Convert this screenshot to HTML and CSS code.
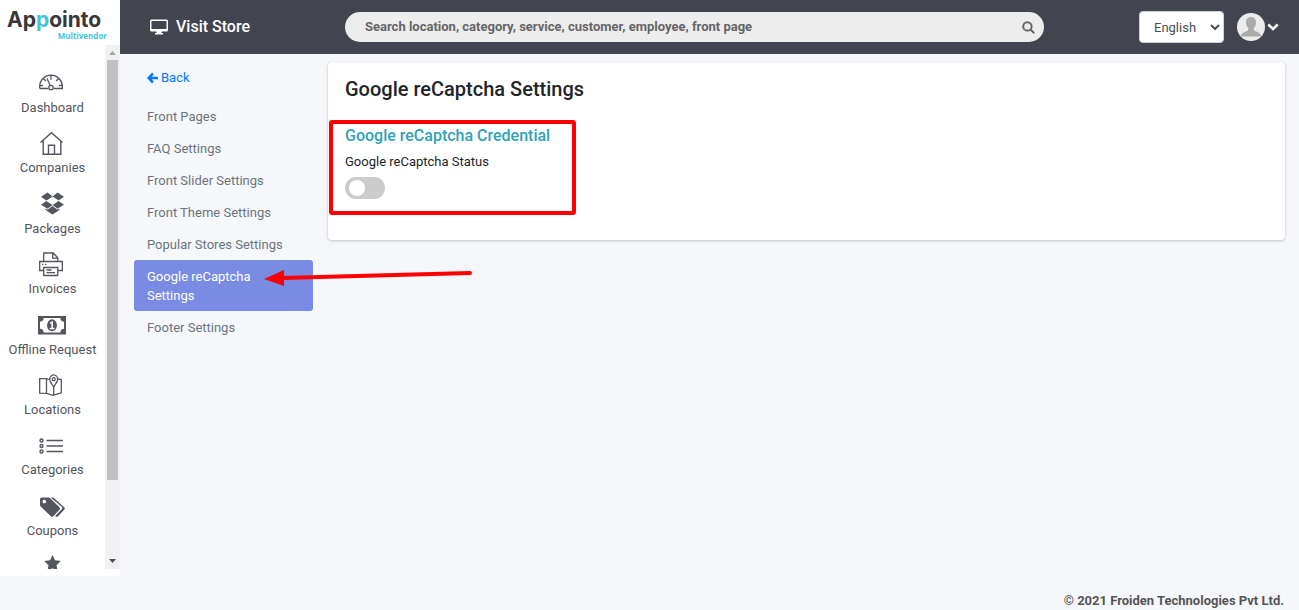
FILE: index.html
```html
<!DOCTYPE html>
<html lang="en">
<head>
<meta charset="utf-8">
<meta name="viewport" content="width=device-width, initial-scale=1">
<title>Google reCaptcha Settings</title>
<link rel="stylesheet" href="styles.css">
</head>
<body>
<div class="app">
  <aside class="sidebar">
    <a class="logo" href="#">
      <span class="logo-name">Ap<span class="logo-accent">p</span>ointo</span>
      <span class="logo-sub">Multivendor</span>
    </a>
    <div class="sidebar-body">
      <nav class="menu">
        <a class="menu-item" href="#">
          <svg class="menu-icon" viewBox="2 0 28 28" fill="none" stroke="currentColor" stroke-width="1.3"><path d="M2.7 20.5v-2.3a11 10.7 0 0 1 22.6 0v2.3h-8.6M2.7 20.5h8.6M14 7.7v4M6.6 10.8l2.2 2.2M21.4 10.8L19.2 13M3 17.5h3M22 17.5h3M10 10.5l3.2 7"/><circle cx="14" cy="19.5" r="2.2"/></svg>
          <span>Dashboard</span>
        </a>
        <a class="menu-item" href="#">
          <svg class="menu-icon" viewBox="1 -1 28 28" fill="none" stroke="currentColor" stroke-width="1.4"><path d="M2.5 13.5L13.5 3.7l11 9.8M5.2 12v13.3h17.6V12M10.5 25.3v-9.1h6v9.1"/></svg>
          <span>Companies</span>
        </a>
        <a class="menu-item menu-item-solid" href="#">
          <svg class="menu-icon" viewBox="1 0 28 28" fill="currentColor"><path d="M9.500 3.500l5.200 4-6.300 4.100L3 7.800zM19.500 3.500L26 7.800l-5.400 3.800-6-4.100zM3 15.700l5.400-3.600 6.100 4-5 3.700zM26 15.700l-5.400-3.600-6 4 5 3.700zM14.500 17l5 3.800 2-1.300v1.400L14.500 25.500l-7-4.600v-1.400l2 1.300z"/></svg>
          <span>Packages</span>
        </a>
        <a class="menu-item" href="#">
          <svg class="menu-icon" viewBox="2 -1 28 28" fill="none" stroke="currentColor" stroke-width="1.3"><path d="M6.700 11.500V3h9.500l4.600 4.700v3.800M15.700 3v5.200h5M6.700 20.500H2.700v-9h22.600v9h-4M6.700 17.500h14.100v8H6.700zM9.500 20h5M9.500 22.700h8.500M5 14.300h1.500M8 14.300h1.500"/></svg>
          <span>Invoices</span>
        </a>
        <a class="menu-item menu-item-solid" href="#">
          <svg class="menu-icon menu-icon-wide" viewBox="1 -1 30 28" fill="currentColor"><path fill-rule="evenodd" d="M1 5h28v18.500H1zM6.700 7A4 4 0 0 1 3 10.700v7a4 4 0 0 1 3.700 3.800h16.600a4 4 0 0 1 3.700-3.800v-7A4 4 0 0 1 23.300 7z"/><ellipse cx="15" cy="14.200" rx="4.900" ry="6"/><path d="M12.800 11.700l2.200-1.400h1v6.500h1.500v1.400h-4.700v-1.400h1.600v-4.500l-1 .700z" fill="#fff"/></svg>
          <span>Offline Request</span>
        </a>
        <a class="menu-item" href="#">
          <svg class="menu-icon" viewBox="2 -2 28 28" fill="none" stroke="currentColor" stroke-width="1.3"><path d="M12 7.500L9.500 6.700H2.700v14.500l6.800.1 6.500 2 8.300-2.500V7.600L20 6.800M9.500 6.700v14.600M16.700 15v8"/><path d="M16.700 15c-1-2.500-4-4.500-4-7.700a4 4.500 0 0 1 8 0c0 3.200-3 5.200-4 7.700z"/><circle cx="16.700" cy="7.200" r="1.500"/></svg>
          <span>Locations</span>
        </a>
        <a class="menu-item" href="#">
          <svg class="menu-icon" viewBox="2 -2 28 28" fill="none" stroke="currentColor" stroke-width="1.400"><circle cx="4.500" cy="8.500" r="1.500"/><circle cx="4.500" cy="14" r="1.500"/><circle cx="4.500" cy="19.500" r="1.500"/><path d="M9.500 8.500h16.500M9.500 14h16.500M9.500 19.500h16.500"/></svg>
          <span>Categories</span>
        </a>
        <a class="menu-item menu-item-solid" href="#">
          <svg class="menu-icon" viewBox="1 -2 28 28" fill="currentColor"><path fill-rule="evenodd" d="M2 6a1.500 1.500 0 0 1 1.500-1.500h7a3 3 0 0 1 2 1L21.600 14.600a1.500 1.500 0 0 1 0 2l-6.500 6.900a1.500 1.500 0 0 1-2 0L3.200 14A3 3 0 0 1 2 11.900zM6.200 6.700a1.800 1.800 0 1 0 .1 0z"/><path d="M12.700 4.500h1.800a3 3 0 0 1 2 1l9.900 9.100a1.500 1.500 0 0 1 0 2l-6.600 6.900c-.9.800-1.800.5-2.600-.4l6.700-7a1.500 1.500 0 0 0 0-2z"/></svg>
          <span>Coupons</span>
        </a>
        <a class="menu-item" href="#" aria-label="Ratings">
          <svg class="menu-icon" viewBox="1 1 28 28" fill="currentColor"><path d="M14.500 5l2.500 5.300 5.700.8-4.200 4.100 1.100 5.800-5.100-2.800L9.400 21l1.100-5.800-4.200-4.100 5.700-.8z"/></svg>
        </a>
      </nav>
      <div class="scrollbar" aria-hidden="true">
        <svg class="scroll-arrow scroll-arrow-up" viewBox="0 0 15 15"><path d="M4 10l3.500-4L11 10z" fill="currentColor"/></svg>
        <div class="scroll-track"><div class="scroll-thumb"></div></div>
        <svg class="scroll-arrow" viewBox="0 0 15 15"><path d="M4 5l3.500 4L11 5z" fill="currentColor"/></svg>
      </div>
    </div>
  </aside>

  <div class="main">
    <header class="topbar">
      <a class="visit" href="#">
        <svg class="visit-icon" viewBox="0 0 18 18"><path fill-rule="evenodd" fill="currentColor" d="M1.500 1.500h15A1.500 1.500 0 0 1 18 3v9a1.500 1.500 0 0 1-1.500 1.500h-5V15H13v1.500H5V15h1.500v-1.500h-5A1.500 1.500 0 0 1 0 12V3a1.500 1.500 0 0 1 1.500-1.500zM1.500 3v8h15V3z"/></svg>
        <span class="visit-text">Visit Store</span>
      </a>
      <form class="search">
        <input class="search-input" type="text" aria-label="Search" placeholder="Search location, category, service, customer, employee, front page">
        <button class="search-button" type="button" aria-label="Search">
          <svg class="search-icon" viewBox="0 0 13 13" fill="none" stroke="currentColor" stroke-width="2"><circle cx="5.400" cy="5.400" r="4.200"/><path d="M8.500 8.500l3.700 3.700"/></svg>
        </button>
      </form>
      <div class="tools">
        <select class="language" aria-label="Language"><option>English</option></select>
        <button class="account" type="button" aria-label="Account">
          <svg class="avatar" viewBox="0 0 28 28"><circle cx="14" cy="14" r="14" fill="#ececec"/><path fill="#aaa" d="M14 4c3 0 5 2.100 5 5.400 0 2.600-1 4.300-2.200 5.600-.3 1.600.2 2.700 1.700 3.300 3.100 1.100 5.200 2.300 5.800 5.300H3.700c.6-3 2.700-4.200 5.800-5.300 1.500-.6 2-1.700 1.700-3.300C10 13.700 9 12 9 9.400 9 6.100 11 4 14 4z"/></svg>
          <svg class="chevron" viewBox="0 0 12 12" fill="none" stroke="currentColor" stroke-width="2.500"><path d="M1.300 3.500L6 8l4.700-4.500"/></svg>
        </button>
      </div>
    </header>

    <div class="content">
      <nav class="settings">
        <a class="back" href="#"><svg class="back-icon" viewBox="0 0 12 12" fill="none" stroke="currentColor" stroke-width="2.800"><path d="M6.500 1L1.900 6l4.600 5M2 6h10"/></svg><span>Back</span></a>
        <a class="tab" href="#">Front Pages</a>
        <a class="tab" href="#">FAQ Settings</a>
        <a class="tab" href="#">Front Slider Settings</a>
        <a class="tab" href="#">Front Theme Settings</a>
        <a class="tab" href="#">Popular Stores Settings</a>
        <a class="tab tab-active" href="#">Google reCaptcha Settings</a>
        <a class="tab" href="#">Footer Settings</a>
        <svg class="pointer" viewBox="0 0 210 20" aria-hidden="true"><path d="M18 9L206 4" stroke="#f00" stroke-width="4" stroke-linecap="round"/><path d="M0 10L20 1v16z" fill="#f00"/></svg>
      </nav>
      <main class="card">
        <h1 class="card-title">Google reCaptcha Settings</h1>
        <section class="credential">
          <h2 class="credential-title">Google reCaptcha Credential</h2>
          <label class="credential-label" for="status">Google reCaptcha Status</label>
          <input class="toggle" id="status" type="checkbox" role="switch">
        </section>
      </main>
    </div>
    <footer class="footer">© 2021 Froiden Technologies Pvt Ltd.</footer>
  </div>
</div>
</body>
</html>
```
FILE: styles.css
```css
* { box-sizing: border-box; }

body {
  margin: 0;
  background: #f5f7fb;
  color: #212529;
  font: 13px/19px Roboto, "Liberation Sans", sans-serif;
}

a { color: inherit; text-decoration: none; }
svg { display: block; flex: none; }

.app { display: flex; align-items: flex-start; min-height: 100vh; }

/* Sidebar */
.sidebar {
  display: flex;
  flex-direction: column;
  flex: 0 0 120px;
  height: calc(100vh - 34px);
  padding-bottom: 7px;
  background: #fff;
}
.logo {
  display: flex;
  flex-direction: column;
  flex: 0 0 45px;
  padding: 8px 13px 0 7px;
  font-family: Inter, sans-serif;
  font-weight: 700;
  color: #383838;
}
.logo-name { font-size: 21px; line-height: 23px; }
.logo-accent { color: #45c6d6; }
.logo-sub { align-self: flex-end; font: 700 8px/9px "Open Sans", sans-serif; color: #45c6d6; }

.sidebar-body { display: flex; flex: 1; min-height: 0; }
.menu { flex: 1; overflow: hidden; padding-top: 23px; }
.menu-item {
  display: flex;
  flex-direction: column;
  align-items: center;
  height: 60px;
  gap: 2px;
  color: #54565e;
  white-space: nowrap;
}
.menu-item-solid { height: 61px; padding-top: 1px; }
.menu-icon { width: 28px; height: 28px; }
.menu-icon-wide { width: 30px; }

.scrollbar { display: flex; flex-direction: column; flex: 0 0 15px; background: #f1f1f1; color: #505050; }
.scroll-arrow { width: 15px; height: 15px; }
.scroll-arrow-up { color: #a3a3a3; }
.scroll-track { flex: 1; padding: 0 2px; }
.scroll-thumb { height: 85%; background: #c1c1c1; }

/* Main column */
.main { display: flex; flex-direction: column; flex: 1; min-width: 0; min-height: 100vh; }

.topbar {
  display: flex;
  align-items: center;
  height: 54px;
  padding: 0 20px 0 30px;
  background: #424550;
  color: #fff;
}
.visit { display: flex; align-items: center; flex: 0 0 195px; gap: 8px; font-size: 16px; font-weight: 500; }
.visit-icon { width: 18px; height: 18px; }
.visit-text { padding-bottom: 2px; }

.search {
  display: flex;
  align-items: center;
  flex: 1;
  height: 30px;
  margin-right: 95px;
  padding: 0 9px 0 20px;
  border-radius: 15px;
  background: #ededee;
}
.search-input {
  flex: 1;
  min-width: 0;
  padding: 0 0 2px;
  border: 0;
  outline: 0;
  background: none;
  font: 700 13px/19px Roboto, sans-serif;
  color: #666;
}
.search-input::placeholder { color: #666; opacity: 1; }
.search-button { padding: 0; border: 0; background: none; color: #666; }
.search-icon { width: 13px; height: 13px; }

.tools { display: flex; align-items: center; gap: 13px; }
.language {
  width: 85px;
  height: 32px;
  padding: 0 0 0 10px;
  border: 1px solid #ced4da;
  border-radius: 4px;
  background: #fff;
  color: #495057;
  font: 13px/19px Roboto, sans-serif;
}
.account { display: flex; align-items: center; gap: 2px; padding: 0; border: 0; background: none; color: #fff; }
.avatar { width: 28px; height: 28px; }
.chevron { width: 12px; height: 12px; }

.content { display: flex; align-items: flex-start; gap: 15px; padding: 8px 14px 0; }

/* Settings navigation */
.settings { position: relative; display: flex; flex-direction: column; flex: 0 0 179px; }
.back { display: flex; align-items: center; gap: 3px; padding: 6px 13px; margin-bottom: 7px; color: #007bff; }
.back-icon { width: 11px; height: 12px; }
.tab { padding: 7px 13px 6px; border-radius: 3px; color: #6c757d; }
.tab-active { background: #798be2; color: #fff; }
.pointer { position: absolute; left: 130px; top: 207px; width: 210px; height: 20px; z-index: 2; }

/* Card */
.card {
  flex: 1;
  min-width: 0;
  padding: 14px 1px 25px;
  border-radius: 4px;
  background: #fff;
  box-shadow: 0 0 1px rgba(0, 0, 0, .15), 0 1px 3px rgba(0, 0, 0, .2);
}
.card-title { margin: 0 16px 18px; font-size: 20px; line-height: 26px; font-weight: 500; }
.credential {
  display: flex;
  flex-direction: column;
  align-items: flex-start;
  width: 247px;
  height: 95px;
  padding: 2px 12px;
  border: 4px solid #f00;
  border-radius: 3px;
}
.credential-title { margin: 0 0 6px; font-size: 16px; line-height: 20px; font-weight: 500; color: #2fa3b7; }
.credential-label { margin-bottom: 6px; }
.toggle {
  display: flex;
  align-items: center;
  width: 40px;
  height: 22px;
  margin: 0;
  padding: 0 4px;
  appearance: none;
  border-radius: 11px;
  background: #ccc;
}
.toggle::before { content: ""; width: 16px; height: 16px; border-radius: 50%; background: #fff; }
.toggle:checked { justify-content: flex-end; background: #2fa3b7; }

.footer { margin-top: auto; padding: 0 15px 0 0; text-align: right; font-weight: 700; color: #555; }
```
